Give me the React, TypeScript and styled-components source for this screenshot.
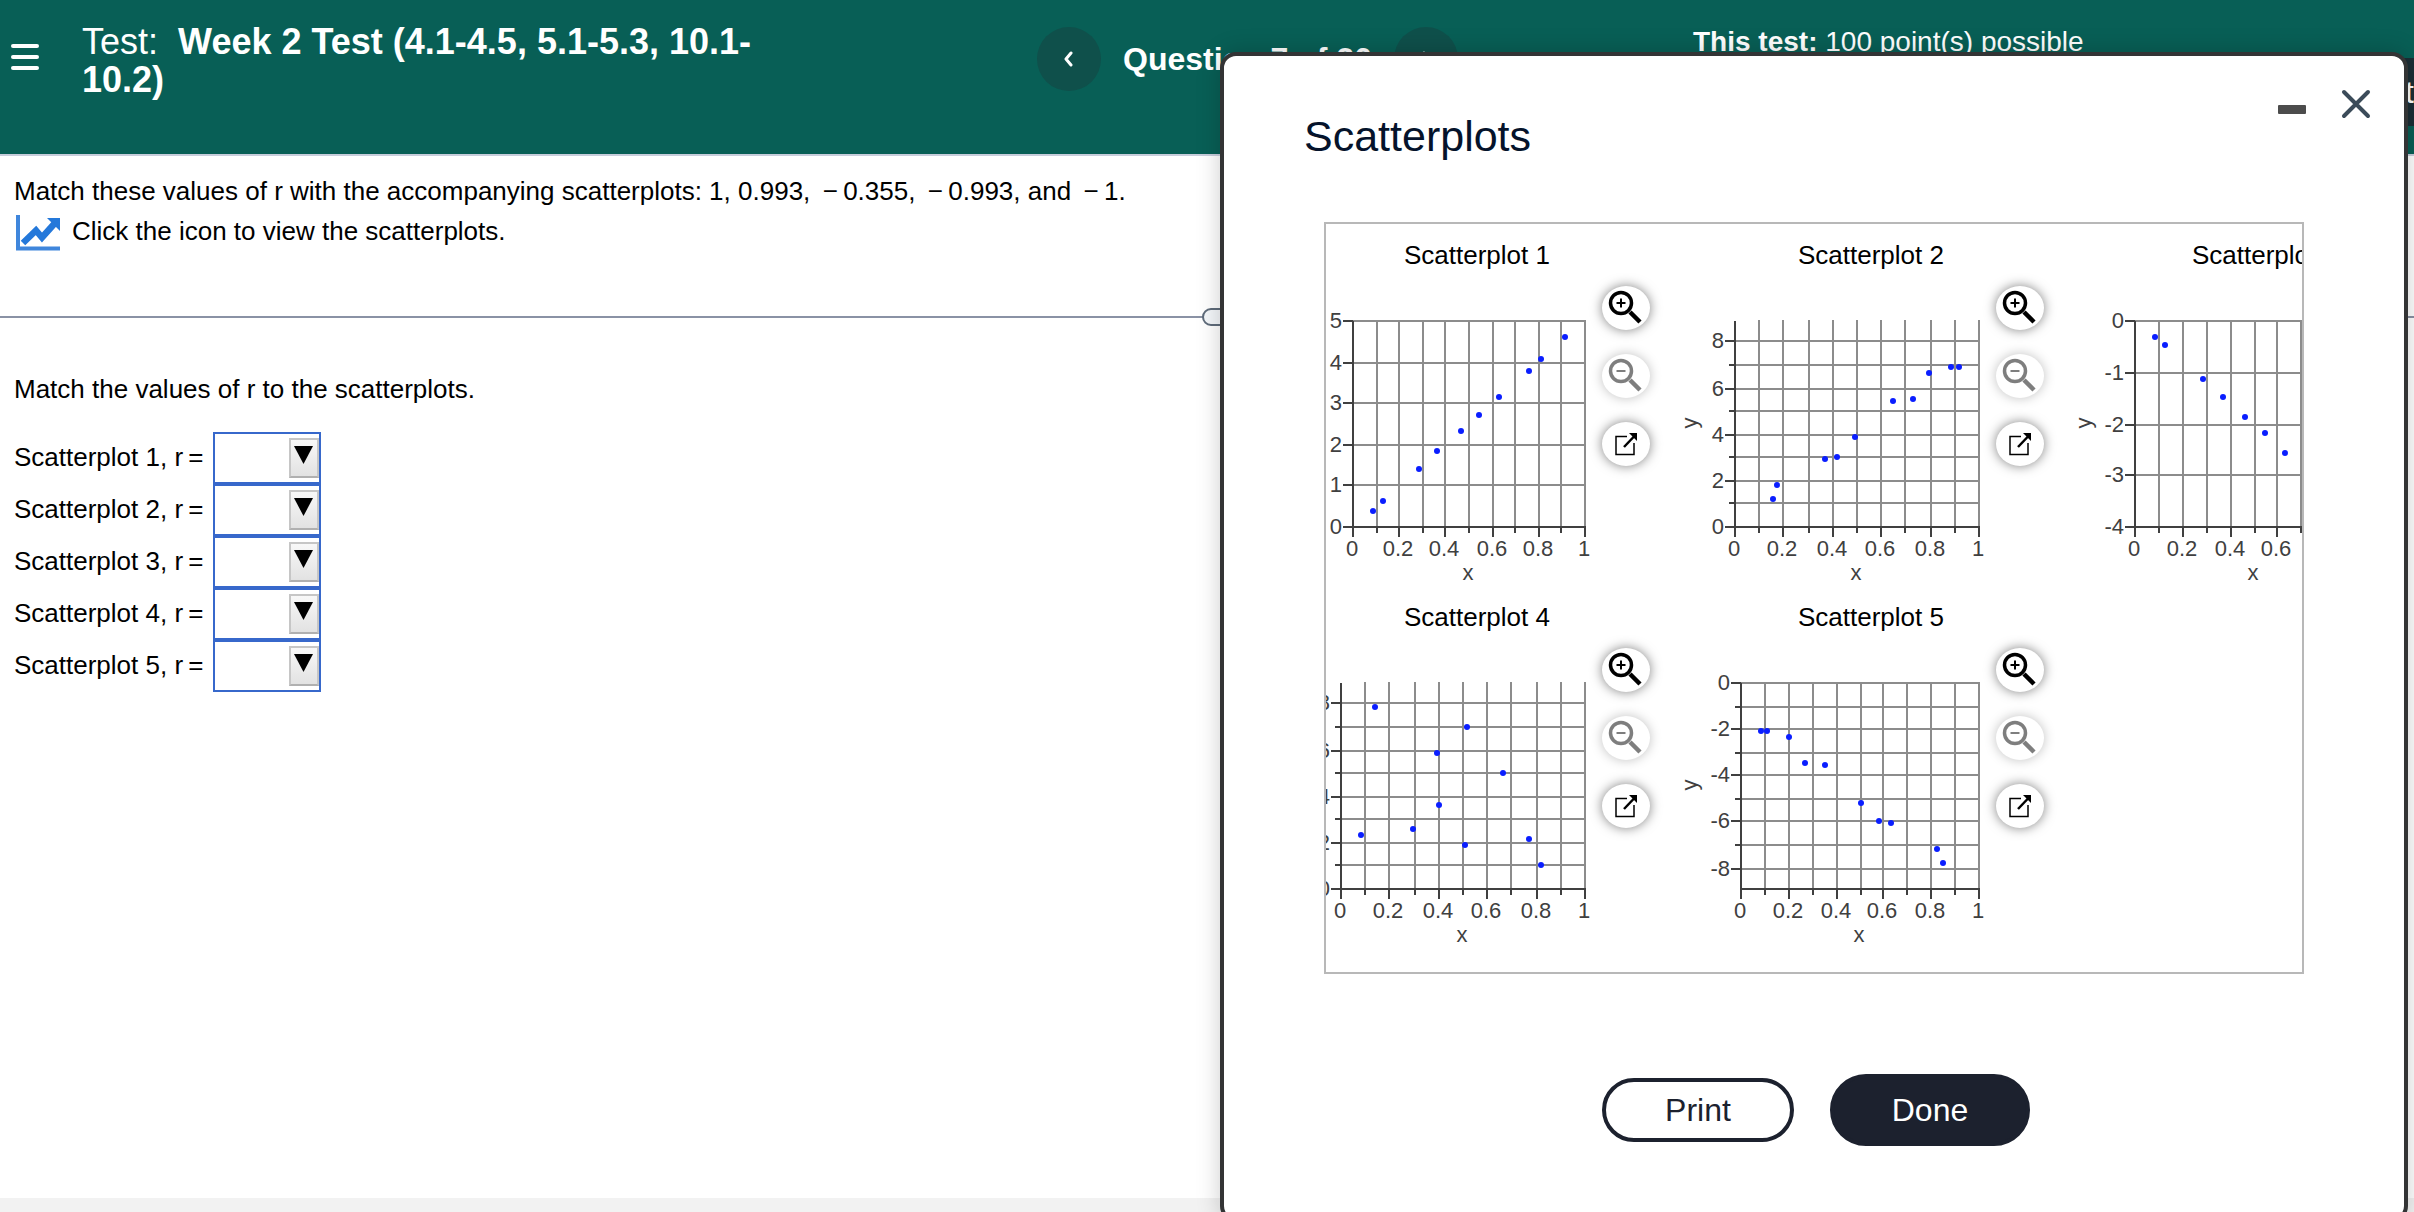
import React, { useLayoutEffect, useRef } from "react";
import styled, { createGlobalStyle } from "styled-components";

const GlobalStyle = createGlobalStyle`
  *, *::before, *::after { box-sizing: border-box; }
  body {
    margin: 0;
    background: #ffffff;
    color: #000000;
    font-family: "Liberation Sans", Arial, Helvetica, sans-serif;
  }
  h1, h2, h3, p { margin: 0; font-weight: 400; }
  button, select { font-family: inherit; }
`;

const Page = styled.div`
  position: relative;
  display: flex;
  flex-direction: column;
  height: 100vh;
  overflow: hidden;
`;

/* ---------- top bar ---------- */

const TopBar = styled.header`
  display: grid;
  grid-template-columns: 82px minmax(0, 955fr) minmax(0, 656fr) minmax(0, 721fr);
  align-items: start;
  flex: none;
  height: 156px;
  background: #085f56;
  border-bottom: 2px solid #c7cddb;
  color: #ffffff;
`;

const MenuButton = styled.button`
  display: flex;
  flex-direction: column;
  gap: 7px;
  margin: 32px 0 0;
  padding: 12px 11px;
  width: 50px;
  border: 0;
  background: transparent;
`;

const MenuLine = styled.span`
  height: 4px;
  border-radius: 2px;
  background: #ffffff;
`;

const TestTitle = styled.h1`
  max-width: 700px;
  padding-top: 23px;
  font-size: 36px;
  line-height: 38px;
  white-space: pre-wrap;
`;

const QuestionNav = styled.nav`
  display: flex;
  align-items: center;
  gap: 22px;
  padding-top: 27px;
`;

const RoundButton = styled.button`
  display: grid;
  place-items: center;
  flex: none;
  width: 64px;
  height: 64px;
  padding: 0;
  border: 0;
  border-radius: 50%;
  background: #0f504b;
  color: #ffffff;
`;

const QuestionLabel = styled.strong`
  font-size: 32px;
  line-height: 64px;
  white-space: nowrap;
`;

const TestInfo = styled.div`
  display: grid;
  padding-top: 26px;
`;

const Points = styled.p`
  font-size: 28px;
  line-height: 32px;
`;

const SubmitButton = styled.button`
  justify-self: end;
  height: 68px;
  padding: 0 0 0 32px;
  border: 0;
  background: #1b2e36;
  color: #ffffff;
  font-size: 32px;
`;

/* ---------- question ---------- */

const Prompt = styled.section`
  flex: none;
  height: 162px;
  padding: 15px 14px;
  border-bottom: 2px solid #8a92a5;
  font-size: 26px;
  line-height: 40px;
`;

const IconLine = styled.div`
  display: flex;
  align-items: flex-end;
  height: 40px;
`;

const IconButton = styled.button`
  display: block;
  padding: 0;
  margin: 0 12px 0 2px;
  border: 0;
  background: transparent;
  svg { display: block; }
`;

const SplitHandle = styled.div`
  position: absolute;
  top: 308px;
  left: calc(50% - 5px);
  width: 48px;
  height: 18px;
  border: 2px solid #5f6c7b;
  border-radius: 9px;
  background: #f4f7fa;
`;

const Answer = styled.section`
  flex: 1;
  padding: 51px 14px 0;
  font-size: 26px;
  line-height: 40px;
`;

const AnswerRows = styled.div`
  display: grid;
  padding-top: 23px;
`;

const AnswerRow = styled.div`
  display: grid;
  grid-template-columns: 199px 108px;
  align-items: start;
  height: 52px;
`;

const RowLabel = styled.label`
  line-height: 50px;
`;

const DropBox = styled.div`
  position: relative;
  width: 108px;
  height: 52px;
`;

const Select = styled.select`
  appearance: none;
  width: 100%;
  height: 100%;
  padding: 0 34px 0 8px;
  border: 2px solid #3768cb;
  border-radius: 0;
  background: #ffffff;
  font-size: 26px;
`;

const DropArrow = styled.span`
  position: absolute;
  top: 6px;
  right: 2px;
  display: grid;
  justify-items: center;
  width: 30px;
  height: 40px;
  padding: 6px 2px 0 0;
  border: 2px solid #c6c6c6;
  border-bottom-color: #b0b0b0;
  background: linear-gradient(#f8f8f8, #e2e2e2);
  pointer-events: none;
`;

const BottomStrip = styled.footer`
  flex: none;
  height: 14px;
  background: #f2f2f2;
`;

/* ---------- dialog ---------- */

const Dialog = styled.section`
  position: absolute;
  top: 52px;
  left: calc(50% + 13px);
  right: 6px;
  padding-bottom: 72px;
  border: 4px solid #333435;
  border-radius: 16px;
  background: #ffffff;
  box-shadow: 0 0 24px rgba(0, 0, 0, 0.2);
`;

const DialogHead = styled.div`
  display: flex;
  align-items: flex-start;
  gap: 20px;
  padding: 26px 26px 0 80px;
`;

const DialogTitle = styled.h2`
  flex: 1;
  padding-top: 30px;
  color: #05132b;
  font-size: 43px;
  line-height: 48px;
`;

const WindowButton = styled.button`
  width: 44px;
  height: 44px;
  padding: 0;
  border: 0;
  background: transparent;
  svg { display: block; }
`;

const PlotFrame = styled.div`
  margin: 62px 100px 0;
  padding: 16px 0 24px;
  border: 2px solid #b8b8b8;
  overflow: auto hidden;
  scrollbar-width: none;
`;

const PlotGrid = styled.div`
  display: grid;
  grid-template-columns: repeat(3, 394px);
  row-gap: 16px;
  width: max-content;
`;

const PlotCell = styled.figure`
  display: grid;
  row-gap: 16px;
  margin: 0;
`;

const PlotName = styled.figcaption`
  font-size: 26px;
  line-height: 30px;
  text-align: center;
`;

const PlotBody = styled.div`
  display: flex;
  gap: 10px;
  > svg { display: block; }
`;

const PlotTools = styled.div`
  display: flex;
  flex-direction: column;
  gap: 24px;
`;

const ToolButton = styled.button<{ $faded?: boolean }>`
  width: 48px;
  height: 44px;
  padding: 0;
  border: 0;
  border-radius: 50%;
  background: #ffffff;
  box-shadow: 0 0 12px rgba(0, 0, 0, 0.5);
  opacity: ${(p) => (p.$faded ? 0.5 : 1)};
  svg { display: block; }
`;

const Actions = styled.div`
  display: flex;
  justify-content: center;
  align-items: center;
  gap: 36px;
  margin-top: 100px;
  padding-left: 4px;
`;

const ActionButton = styled.button<{ $solid?: boolean }>`
  width: ${(p) => (p.$solid ? 200 : 192)}px;
  height: ${(p) => (p.$solid ? 72 : 64)}px;
  padding: 0;
  border: 4px solid #1c212e;
  border-radius: 36px;
  background: ${(p) => (p.$solid ? "#1c212e" : "#ffffff")};
  color: ${(p) => (p.$solid ? "#ffffff" : "#1c212e")};
  font-size: 32px;
`;

/* ---------- charts ---------- */

type Plot = {
  name: string;
  width: number;
  low: number;
  high: number;
  step: number;
  labelEvery: number;
  points: [number, number][];
};

const PLOTS: Plot[] = [
  {
    name: "Scatterplot 1", width: 232, low: 0, high: 5, step: 1, labelEvery: 1,
    points: [[0.086, 0.39], [0.129, 0.63], [0.284, 1.41], [0.362, 1.84], [0.466, 2.33], [0.543, 2.72], [0.629, 3.16], [0.759, 3.79], [0.81, 4.08], [0.914, 4.61]],
  },
  {
    name: "Scatterplot 2", width: 244, low: 0, high: 8.9, step: 1, labelEvery: 2,
    points: [[0.156, 1.21], [0.172, 1.81], [0.369, 2.94], [0.418, 3.02], [0.492, 3.89], [0.648, 5.44], [0.73, 5.53], [0.795, 6.65], [0.885, 6.91], [0.918, 6.91]],
  },
  {
    name: "Scatterplot 3", width: 238, low: -4, high: 0, step: 1, labelEvery: 1,
    points: [[0.084, -0.31], [0.126, -0.47], [0.286, -1.13], [0.37, -1.48], [0.462, -1.86], [0.546, -2.17], [0.63, -2.56], [0.76, -3.05], [0.81, -3.27], [0.914, -3.69]],
  },
  {
    name: "Scatterplot 4", width: 244, low: 0, high: 8.9, step: 1, labelEvery: 2,
    points: [[0.139, 7.86], [0.516, 7], [0.393, 5.88], [0.664, 5.01], [0.402, 3.63], [0.082, 2.33], [0.295, 2.59], [0.508, 1.9], [0.77, 2.16], [0.82, 1.04]],
  },
  {
    name: "Scatterplot 5", width: 238, low: -8.9, high: 0, step: 1, labelEvery: 2,
    points: [[0.084, -2.07], [0.109, -2.07], [0.202, -2.33], [0.269, -3.46], [0.353, -3.54], [0.504, -5.18], [0.58, -5.96], [0.63, -6.05], [0.824, -7.17], [0.849, -7.78]],
  },
];

const RIGHT = 305;
const TOP = 35;
const HEIGHT = 206;
const BOTTOM = TOP + HEIGHT;
const AXIS = "#404040";
const GRID = "#8c8c8c";

const even = (v: number) => Math.round(v / 2) * 2;

function Chart({ plot }: { plot: Plot }) {
  const left = RIGHT - plot.width;
  const sx = (v: number) => left + even(v * plot.width);
  const sy = (v: number) => TOP + even(((plot.high - v) / (plot.high - plot.low)) * HEIGHT);
  const xs = Array.from({ length: 11 }, (_, i) => i);
  const ys: number[] = [];
  for (let v = Math.ceil(plot.low); v <= plot.high; v += plot.step) ys.push(v);

  return (
    <svg width="312" height="300" viewBox="0 0 312 300" role="img" aria-label={plot.name} fontSize="22" fill={AXIS}>
      <g stroke={GRID} strokeWidth="2">
        {xs.slice(1).map((i) => <path key={i} d={`M${sx(i / 10)} ${TOP - 1}V${BOTTOM}`} />)}
        {ys.map((v) => <path key={v} d={`M${left} ${sy(v)}H${RIGHT + 1}`} />)}
      </g>
      <g stroke={AXIS} strokeWidth="2">
        <path d={`M${left} ${TOP}V${BOTTOM}`} />
        <path d={`M${left} ${BOTTOM}H${RIGHT + 1}`} />
        {xs.map((i) => <path key={i} d={`M${sx(i / 10)} ${BOTTOM}v${i % 2 ? 6 : 10}`} />)}
        {ys.map((v) => <path key={v} d={`M${left} ${sy(v)}h${v % plot.labelEvery ? -6 : -10}`} />)}
      </g>
      <g textAnchor="middle">
        {xs.filter((i) => i % 2 === 0).map((i) => (
          <text key={i} x={sx(i / 10) - 1} y={BOTTOM + 29}>{i / 10}</text>
        ))}
        <text x={left + plot.width / 2 - 1} y={BOTTOM + 53}>x</text>
        <text transform="translate(23 137) rotate(-90)">y</text>
      </g>
      <g textAnchor="end">
        {ys.filter((v) => v % plot.labelEvery === 0).map((v) => (
          <text key={v} x={left - 11} y={sy(v) + 7}>{v === 0 ? 0 : v}</text>
        ))}
      </g>
      <g fill="#0a1eff">
        {plot.points.map(([x, y]) => <circle key={`${x} ${y}`} cx={sx(x)} cy={sy(y)} r="3" />)}
      </g>
    </svg>
  );
}

function ZoomIcon({ plus }: { plus?: boolean }) {
  return (
    <svg width="48" height="44" viewBox="0 0 48 44" fill="none" stroke="#000000" aria-hidden="true">
      <circle cx="19" cy="17" r="10.500" strokeWidth="3.500" />
      <path d="M28 26L38 36" strokeWidth="4.500" />
      <path d={plus ? "M14.500 17H23.500M19 12.500V21.500" : "M14.500 17H23.500"} strokeWidth="2" />
    </svg>
  );
}

function PopOutIcon() {
  return (
    <svg width="48" height="44" viewBox="0 0 48 44" fill="none" stroke="#000000" aria-hidden="true">
      <path d="M25 14.500H14V32.500H32V21" strokeWidth="1.500" />
      <path d="M22 25L32 14.500" strokeWidth="2.500" />
      <path d="M27 11H35V19Z" fill="#000000" stroke="none" />
    </svg>
  );
}

function TrendIcon() {
  return (
    <svg width="44" height="36" viewBox="0 0 44 36" aria-hidden="true">
      <path d="M2 0V33.500H44" fill="none" stroke="#3f86dc" strokeWidth="4" />
      <path d="M7 28L20 15.500L26 22.500L39 8" fill="none" stroke="#2478da" strokeWidth="6.500" />
      <path d="M31 3H44V16Z" fill="#2478da" />
    </svg>
  );
}

export default function App() {
  const frame = useRef<HTMLDivElement>(null);
  useLayoutEffect(() => {
    if (frame.current) frame.current.scrollLeft = 46;
  }, []);

  return (
    <Page>
      <GlobalStyle />
      <TopBar>
        <MenuButton aria-label="Menu">
          <MenuLine /><MenuLine /><MenuLine />
        </MenuButton>
        <TestTitle>Test:{"  "}<b>Week 2 Test (4.1-4.5, 5.1-5.3, 10.1-10.2)</b></TestTitle>
        <QuestionNav>
          <RoundButton aria-label="Previous question">
            <svg width="12" height="16" viewBox="0 0 12 16" fill="none" stroke="currentColor" strokeWidth="3" strokeLinecap="round" strokeLinejoin="round">
              <path d="M8 2L3 8L8 14" />
            </svg>
          </RoundButton>
          <QuestionLabel>Question 7 of 20</QuestionLabel>
          <RoundButton aria-label="Next question">
            <svg width="12" height="16" viewBox="0 0 12 16" fill="none" stroke="currentColor" strokeWidth="3" strokeLinecap="round" strokeLinejoin="round">
              <path d="M4 2L9 8L4 14" />
            </svg>
          </RoundButton>
        </QuestionNav>
        <TestInfo>
          <Points><b>This test:</b> 100 point(s) possible</Points>
          <SubmitButton>Submit test</SubmitButton>
        </TestInfo>
      </TopBar>

      <Prompt>
        <p>Match these values of r with the accompanying scatterplots: 1, 0.993, &thinsp;−&thinsp;0.355, &thinsp;−&thinsp;0.993, and &thinsp;−&thinsp;1.</p>
        <IconLine>
          <IconButton aria-label="View the scatterplots"><TrendIcon /></IconButton>
          <span>Click the icon to view the scatterplots.</span>
        </IconLine>
      </Prompt>

      <Answer>
        <p>Match the values of r to the scatterplots.</p>
        <AnswerRows>
          {PLOTS.map((plot, i) => (
            <AnswerRow key={plot.name}>
              <RowLabel htmlFor={`r-${i}`}>{plot.name}, r&thinsp;=</RowLabel>
              <DropBox>
                <Select id={`r-${i}`} defaultValue="">
                  <option value="" />
                  <option>1</option>
                  <option>0.993</option>
                  <option>−0.355</option>
                  <option>−0.993</option>
                  <option>−1</option>
                </Select>
                <DropArrow aria-hidden="true">
                  <svg width="19" height="18" viewBox="0 0 19 18"><path d="M0 0H19L9.500 18Z" /></svg>
                </DropArrow>
              </DropBox>
            </AnswerRow>
          ))}
        </AnswerRows>
      </Answer>
      <BottomStrip />
      <SplitHandle />

      <Dialog role="dialog" aria-labelledby="dialog-title">
        <DialogHead>
          <DialogTitle id="dialog-title">Scatterplots</DialogTitle>
          <WindowButton aria-label="Minimize">
            <svg width="44" height="44" viewBox="0 0 44 44"><rect x="8" y="23" width="28" height="9" rx="1" fill="#4c4c4c" /></svg>
          </WindowButton>
          <WindowButton aria-label="Close">
            <svg width="44" height="44" viewBox="0 0 44 44" stroke="#3b4b59" strokeWidth="4" strokeLinecap="round">
              <path d="M10 10L34 34M34 10L10 34" />
            </svg>
          </WindowButton>
        </DialogHead>
        <PlotFrame ref={frame}>
          <PlotGrid>
            {PLOTS.map((plot) => (
              <PlotCell key={plot.name}>
                <PlotName>{plot.name}</PlotName>
                <PlotBody>
                  <Chart plot={plot} />
                  <PlotTools>
                    <ToolButton aria-label="Zoom in"><ZoomIcon plus /></ToolButton>
                    <ToolButton aria-label="Zoom out" $faded><ZoomIcon /></ToolButton>
                    <ToolButton aria-label="Open in new window"><PopOutIcon /></ToolButton>
                  </PlotTools>
                </PlotBody>
              </PlotCell>
            ))}
          </PlotGrid>
        </PlotFrame>
        <Actions>
          <ActionButton>Print</ActionButton>
          <ActionButton $solid>Done</ActionButton>
        </Actions>
      </Dialog>
    </Page>
  );
}
